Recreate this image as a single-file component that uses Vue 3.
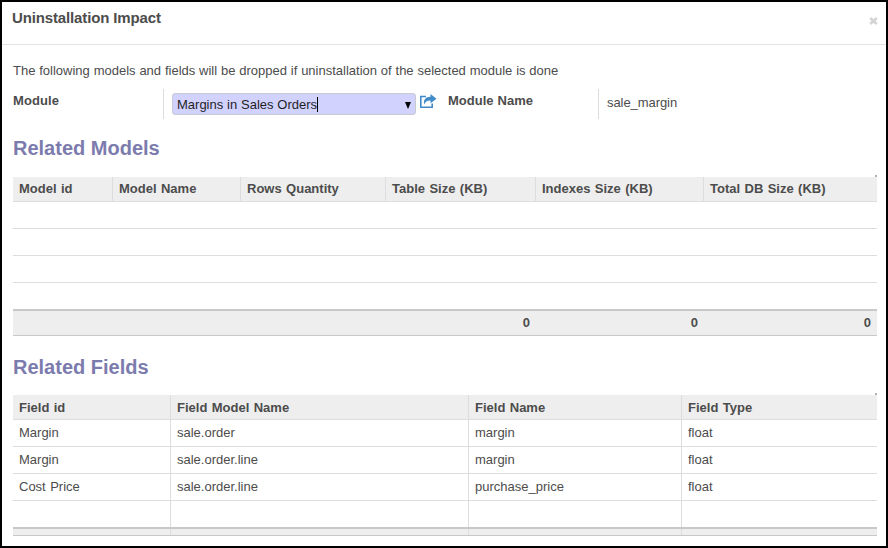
<script setup>
const models = {
  columns: ['Model id', 'Model Name', 'Rows Quantity', 'Table Size (KB)', 'Indexes Size (KB)', 'Total DB Size (KB)'],
  totals: ['', '', '', '0', '0', '0'],
}
const fields = {
  columns: ['Field id', 'Field Model Name', 'Field Name', 'Field Type'],
  rows: [
    ['Margin', 'sale.order', 'margin', 'float'],
    ['Margin', 'sale.order.line', 'margin', 'float'],
    ['Cost Price', 'sale.order.line', 'purchase_price', 'float'],
    ['', '', '', ''],
  ],
}
</script>

<template>
  <div class="dialog">
    <header class="titlebar">
      <h1><span>Uninstallation Impact</span></h1>
      <button class="close" aria-label="Close">
        <svg width="9" height="8" viewBox="0 0 9 8"><path d="M1.2 1L7.8 7M7.8 1L1.2 7" /></svg>
      </button>
    </header>
    <main class="content">
      <p class="intro">The following models and fields will be dropped if uninstallation of the selected module is done</p>
      <div class="form">
        <label class="label first">Module</label>
        <div class="cell wide">
          <div class="combo">
            <span class="value">Margins in Sales Orders</span><i class="caret"></i>
            <svg class="arrow" width="6" height="7" viewBox="0 0 6 7"><path d="M0 0H6L3 7Z" /></svg>
          </div>
          <svg class="open" width="18" height="15" viewBox="0 0 18 15">
            <path class="box" d="M7 2.5H1.8V13.2H13.2V9.5" />
            <path class="share" d="M11.5 0L17.5 4.7L11.5 9.2V6.5C8.3 6.5 6.6 7.4 5.2 10.4C4.2 6 6.5 2.8 11.5 2.8Z" />
          </svg>
        </div>
        <label class="label second">Module Name</label>
        <div class="cell"><span class="text">sale_margin</span></div>
      </div>

      <h2 class="heading"><span>Related Models</span></h2>
      <section class="grid models">
        <div class="row head"><div v-for="c in models.columns" :key="c" class="td"><span>{{ c }}</span></div></div>
        <div v-for="n in 4" :key="n" class="row blank"></div>
        <div class="row foot"><div v-for="(t, i) in models.totals" :key="i" class="td"><span>{{ t }}</span></div></div>
      </section>

      <h2 class="heading lower"><span>Related Fields</span></h2>
      <section class="grid fields">
        <div class="row head"><div v-for="c in fields.columns" :key="c" class="td"><span>{{ c }}</span></div></div>
        <div v-for="(r, i) in fields.rows" :key="i" class="row">
          <div v-for="(v, j) in r" :key="j" class="td"><span>{{ v }}</span></div>
        </div>
        <div class="row foot"><div v-for="c in fields.columns" :key="c" class="td"></div></div>
      </section>
    </main>
  </div>
</template>

<style>
body { margin: 0; background: #fff; }
</style>

<style scoped>
* { box-sizing: border-box; }
.dialog { width: 888px; height: 548px; border: 2px solid #000; background: #fff; overflow: hidden; color: #4c4c4c; font: 13px/15px "Liberation Sans", Arial, sans-serif; white-space: nowrap; }
.titlebar { height: 43px; border-bottom: 1px solid #e2e2e2; padding: 7px 8px 0 10px; display: flex; justify-content: space-between; }
h1 { margin: 0; font-size: 15px; line-height: 18px; font-weight: bold; letter-spacing: -0.14px; }
.close { width: 9px; height: 8px; margin-top: 8px; padding: 0; border: 0; background: none; display: flex; }
.close path { stroke: #d4d4d4; stroke-width: 2.7; fill: none; }
.content { padding: 18px 9px 0 11px; }
.intro { margin: 0; height: 26px; line-height: 16px; word-spacing: 0.22px; }
.form { display: flex; height: 30px; }
.label { font-weight: bold; line-height: 16px; padding-top: 4px; word-spacing: 0.5px; }
.first { width: 150px; letter-spacing: 0.1px; }
.second { width: 150px; }
.cell { border-left: 1px solid #ddd; display: flex; padding-left: 8px; }
.wide { width: 285px; padding-top: 4px; }
.combo { width: 244px; height: 22px; border: 1px solid #c9c9d2; border-radius: 3px; background: #d2d2ff; color: #1f1f1f; display: flex; align-items: center; padding: 0 4px; word-spacing: 0.2px; }
.caret { width: 1px; height: 15px; background: #000; }
.arrow { margin: 3px 0 0 auto; fill: #000; }
.open { margin: 1px 0 0 3px; }
.open .box { fill: none; stroke: #428bca; stroke-width: 1.6; }
.open .share { fill: #428bca; }
.text { line-height: 16px; padding-top: 6px; letter-spacing: -0.07px; }
.heading { margin: 0; height: 58px; padding-top: 17px; font-size: 20px; line-height: 24px; color: #7c7bad; }
.lower { height: 59px; padding-top: 19px; }
.grid { width: 864px; position: relative; }
.grid::before { content: ""; position: absolute; right: 0; top: -2px; width: 2px; height: 2px; background: #afafb6; }
.row { display: grid; height: 27px; border-bottom: 1px solid #ddd; word-spacing: 0.8px; }
.models .row { grid-template-columns: 100px 128px 145px 150px 168px 173px; }
.fields .row { grid-template-columns: 158px 298px 213px 195px; }
.td { border-right: 1px solid #ddd; padding: 5px 6px 0; line-height: 16px; }
.td:last-child { border-right: 0; }
.head { height: 25px; background: #eee; font-weight: bold; }
.head .td { padding-top: 4px; }
.fields .head .td { padding-top: 5px; }
.row:nth-last-child(2) { height: 26px; border-bottom: 0; }
.models .foot { height: 27px; }
.foot { height: 9px; background: #eee; border-top: 2px solid #c8c8c8; border-bottom-color: #c8c8c8; font-weight: bold; text-align: right; }
.models .foot .td { border-right: 0; padding-top: 4px; }
</style>
